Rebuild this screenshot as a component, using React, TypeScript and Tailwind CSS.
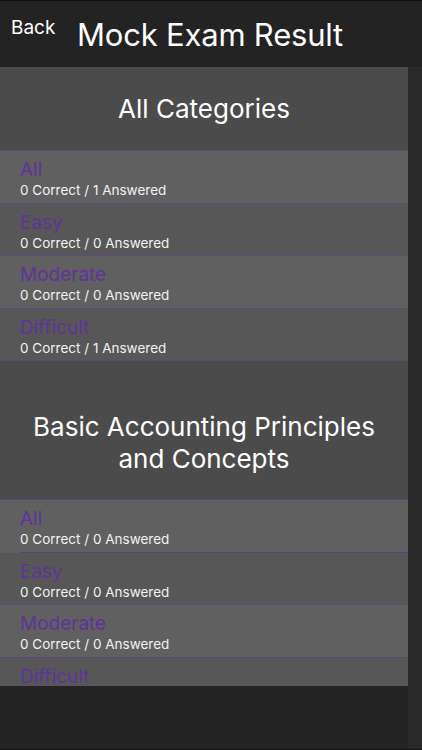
import React from "react";

type Row = { label: string; correct: number; answered: number };

const sections: { title: string[]; rows: Row[]; h: string; pad: string }[] = [
  {
    title: ["All Categories"],
    h: "h-[84px]",
    pad: "pt-0",
    rows: [
      { label: "All", correct: 0, answered: 1 },
      { label: "Easy", correct: 0, answered: 0 },
      { label: "Moderate", correct: 0, answered: 0 },
      { label: "Difficult", correct: 0, answered: 1 },
    ],
  },
  {
    title: ["Basic Accounting Principles", "and Concepts"],
    h: "h-[139px]",
    pad: "pt-[25px]",
    rows: [
      { label: "All", correct: 0, answered: 0 },
      { label: "Easy", correct: 0, answered: 0 },
      { label: "Moderate", correct: 0, answered: 0 },
      { label: "Difficult", correct: 0, answered: 0 },
    ],
  },
];

export default function App() {
  return (
    <div
      className="w-[422px] h-[750px] bg-[#232323] flex flex-col overflow-hidden border-t border-b border-[#111111]"
      style={{ fontFamily: "Inter, 'Open Sans', sans-serif" }}
    >
      <header className="h-[66px] flex items-center shrink-0">
        <div className="w-[77px] pl-[11px] text-[19px] text-white self-start pt-[15px] leading-[24px]">Back</div>
        <div className="text-[31px] text-white leading-[36px] pt-[2px] tracking-[-0.2px]">Mock Exam Result</div>
      </header>
      <div className="flex flex-1 min-h-0">
        <div className="w-[408px] flex flex-col">
          <div className="h-[619px] overflow-hidden bg-[#4b4b4b]">
            {sections.map((s, si) => (
              <div key={si}>
                <div className={`${s.h} ${s.pad} flex flex-col items-center justify-center text-white text-[26px] leading-[31.5px] text-center border-b border-[#5b4580]`}>
                  {s.title.map((t) => (
                    <div key={t}>{t}</div>
                  ))}
                </div>
                {s.rows.map((r, ri) => (
                  <div
                    key={ri}
                    className={`h-[52.5px] pl-[20px] pt-[8px] relative ${ri % 2 === 0 ? "bg-[#606060]" : "bg-[#575757]"}`}
                  >
                    <div className="text-[19px] leading-[22px] text-[#5f3399]">{r.label}</div>
                    <div className="text-[13.5px] leading-[17px] mt-[1px] text-[#f2f2f2]">
                      {r.correct} Correct / {r.answered} Answered
                    </div>
                    {si === 1 && ri === 0 ? (
                      <div className="absolute left-[20px] right-0 bottom-0 h-[1px] bg-[#5b3f8a]" />
                    ) : (
                      <div className="absolute left-0 right-0 bottom-0 h-[1px] bg-[#5a4a75]" />
                    )}
                  </div>
                ))}
              </div>
            ))}
          </div>
        </div>
        <div className="flex-1 bg-[#2a2a2a]" />
      </div>
    </div>
  );
}
